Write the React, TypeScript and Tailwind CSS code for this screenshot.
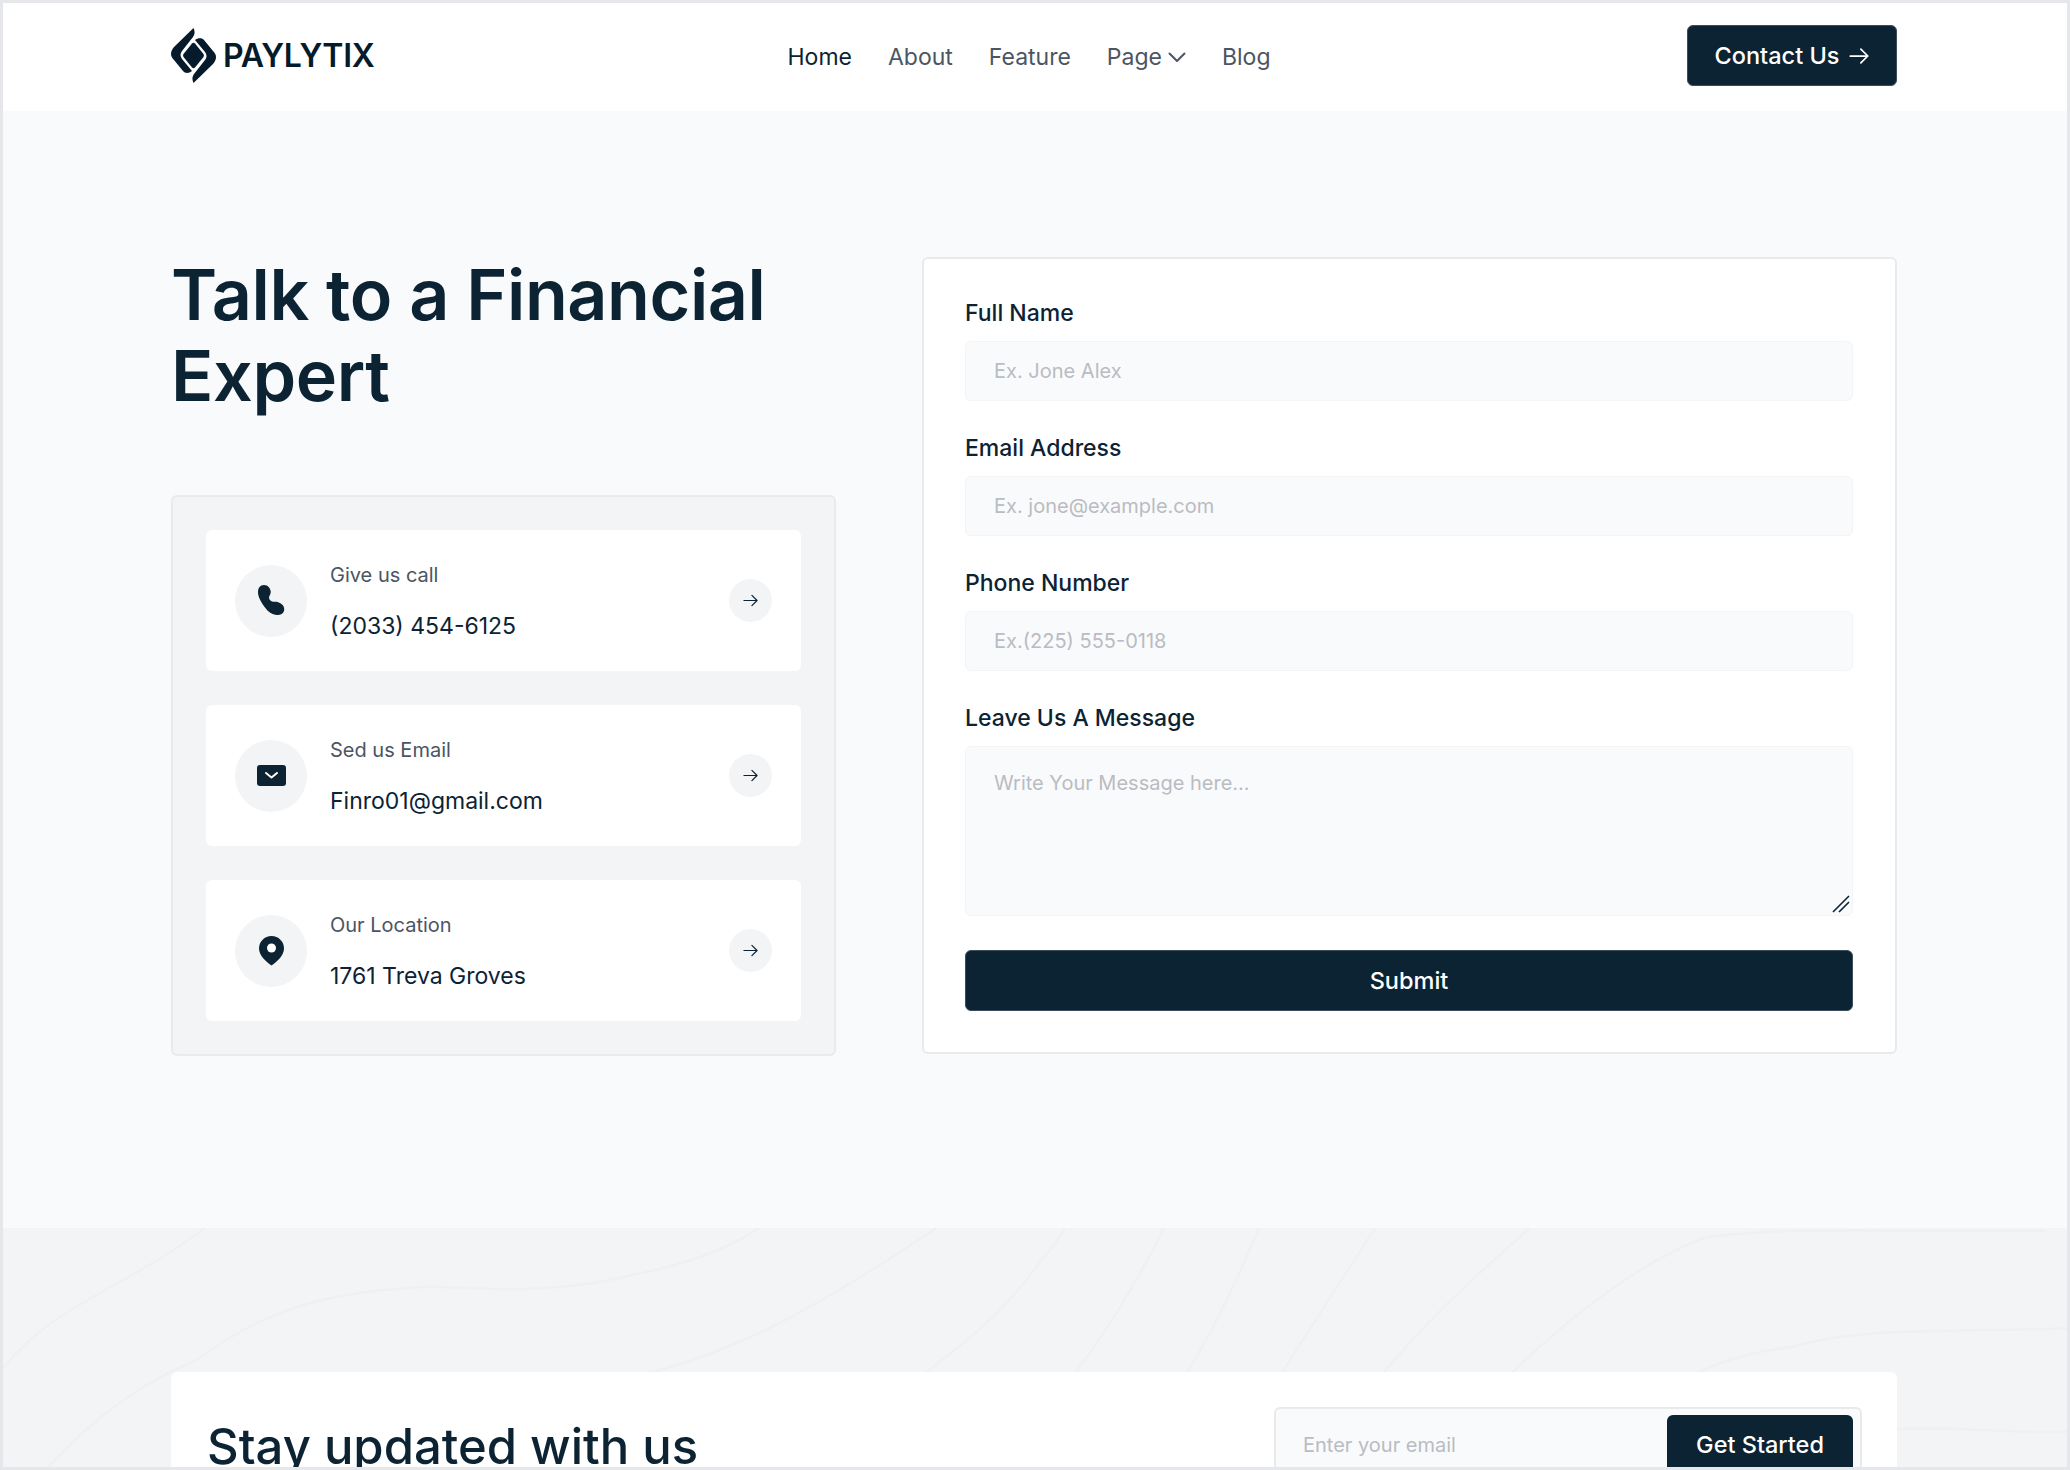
const Arrow = ({ size = 15, width = 1.3 }: { size?: number; width?: number }) => (
  <svg width={size} height={size} viewBox="0 0 16 16" fill="none" stroke="currentColor" strokeWidth={width} strokeLinecap="round" strokeLinejoin="round">
    <path d="M1 8h14M9.5 2.5 15 8l-5.5 5.5" />
  </svg>
);

const Logo = () => (
  <svg width="45" height="55" viewBox="0 0 45 55" fill="#051a2a">
    <path d="M22.5 0C24 3 24 6 22 9L11 23C9 25.5 9 28.5 11 31L21 43C18 45.5 14 45.5 12 43L3 32C-1 28-1 24 3 19Z" />
    <path d="M22.5 0C24 3 24 6 22 9L11 23C9 25.5 9 28.5 11 31L21 43C18 45.5 14 45.5 12 43L3 32C-1 28-1 24 3 19Z" transform="rotate(180 22.5 27.5)" />
    <path d="M21 15.5Q22.5 14 24 15.5L32.5 26Q33.5 27.5 32.5 29L24 39.5Q22.5 41 21 39.5L12.5 29Q11.5 27.5 12.5 26Z" />
  </svg>
);

const PhoneIcon = () => (
  <svg width="27" height="31" viewBox="0 0 27 31" fill="#0c2333">
    <path d="M6 0C10 0 12 3 12.7 6C13.2 9 11 10.5 11 13C11.5 15 13 16.5 15 16.8C17.5 16.5 19.5 16.5 22 18C25 19.5 27 22.5 26 26C25 29 22 30.5 18.5 30C14 29.5 10 27 7 22.5C3 17 0 12 0 7C0 3 2 0 6 0Z" />
  </svg>
);

const MailIcon = () => (
  <svg width="29" height="21" viewBox="0 0 29 21">
    <rect width="29" height="21" rx="3" fill="#0c2333" />
    <path d="M9 8l5.5 4.5L20 8" fill="none" stroke="#fff" strokeWidth="2" strokeLinecap="round" strokeLinejoin="round" />
  </svg>
);

const PinIcon = () => (
  <svg width="25" height="30" viewBox="0 0 25 30">
    <path d="M12.5 0C19.5 0 25 5.5 25 12.5C25 19.5 18 25.5 12.5 29.5C7 25.5 0 19.5 0 12.5C0 5.5 5.5 0 12.5 0Z" fill="#0c2333" />
    <circle cx="12.5" cy="12" r="4.5" fill="#fff" />
  </svg>
);

const contacts = [
  { icon: <PhoneIcon />, label: 'Give us call', value: '(2033) 454-6125' },
  { icon: <MailIcon />, label: 'Sed us Email', value: 'Finro01@gmail.com' },
  { icon: <PinIcon />, label: 'Our Location', value: '1761 Treva Groves' },
];

const fields = [
  { label: 'Full Name', placeholder: 'Ex. Jone Alex' },
  { label: 'Email Address', placeholder: 'Ex. jone@example.com' },
  { label: 'Phone Number', placeholder: 'Ex.(225) 555-0118' },
];

const inputClass =
  'w-full bg-[#f9fafb] border border-[#f3f4f6] rounded-md px-[28px] text-[20px] text-[#0c2333] placeholder:text-[#b9bcc2] outline-none';

const Waves = () => (
  <svg className="absolute inset-0 w-full h-full" viewBox="0 0 2064 240" preserveAspectRatio="none" fill="none" stroke="#eff0f2" strokeWidth="2">
    <path d="M-3 115C50 60 120 50 202 0" />
    <path d="M-3 239C60 170 120 130 195 105C270 60 340 50 426 47C480 48 520 52 590 44C650 35 710 25 756 0" />
    <path d="M327 144C350 132 380 128 419 127C470 128 520 132 590 125C720 110 820 60 934 0" />
    <path d="M129 239C140 225 155 210 169 215" />
    <path d="M875 144C950 100 1000 70 1032 32C1045 20 1055 10 1062 0" />
    <path d="M1045 144C1090 100 1130 50 1161 0" />
    <path d="M1161 144C1200 100 1230 50 1256 0" />
    <path d="M1256 144C1300 90 1340 40 1372 0" />
    <path d="M1355 144C1400 90 1470 40 1527 0" />
    <path d="M1474 144C1550 80 1630 30 1700 8C1780-2 1900 4 2042 2" />
    <path d="M1643 144C1690 110 1740 100 1790 95C1860 78 1960 84 2067 80" />
    <path d="M1893 161C1950 158 2010 165 2067 163" />
  </svg>
);

const App = () => {
  return (
    <div className="h-[1470px] overflow-hidden border-[3px] border-[#e5e7eb] bg-[#f9fafb] text-[#0c2333] font-['Inter',sans-serif]">
      <header className="h-[108px] bg-white pl-[168px] pr-[170px] flex items-center justify-between">
        <div className="flex items-center gap-[7px] w-[590px] -mt-[3px]">
          <Logo />
          <span className="text-[32px] font-semibold leading-none tracking-[-0.3px] text-[#051a2a]">PAYLYTIX</span>
        </div>
        <nav className="flex items-center gap-[36px] text-[23px] text-[#4b5563]">
          <a className="text-[#0c2333]">Home</a>
          <a>About</a>
          <a>Feature</a>
          <a className="flex items-center gap-[6px]">
            Page
            <svg width="18" height="11" viewBox="0 0 18 11" fill="none" stroke="currentColor" strokeWidth="2" strokeLinecap="round" strokeLinejoin="round">
              <path d="M1.5 1.5 9 9l7.5-7.5" />
            </svg>
          </a>
          <a>Blog</a>
        </nav>
        <div className="w-[600px] flex justify-end -mt-[3px]">
          <button className="h-[61px] w-[210px] rounded-md bg-[#0c2333] border border-[#3a4d5b] text-white text-[23.5px] font-medium flex items-center justify-center gap-[10px]">
            Contact Us
            <Arrow size={20} width={1.4} />
          </button>
        </div>
      </header>

      <main className="pl-[168px] pr-[170px] pt-[146px] h-[1117px] flex gap-[86px] items-start">
        <div className="w-[665px] shrink-0">
          <h1 className="text-[70px] leading-[81px] font-semibold tracking-[-0.4px] h-[238px] -mt-[3px] mb-[3px]">
            Talk to a Financial
            <br />
            Expert
          </h1>
          <div className="h-[561px] bg-[#f3f4f6] border-2 border-[#e9eaec] rounded-md p-[33px] flex flex-col gap-[34px]">
            {contacts.map((c) => (
              <div key={c.label} className="h-[141px] bg-white rounded-md pl-[29px] pr-[29px] flex items-center">
                <div className="w-[72px] h-[72px] rounded-full bg-[#f3f4f6] flex items-center justify-center">{c.icon}</div>
                <div className="ml-[23px] mt-[1px] flex-1 flex flex-col gap-[19px]">
                  <p className="text-[20px] leading-[30px] text-[#4b5563]">{c.label}</p>
                  <p className="text-[23px] leading-[34px]">{c.value}</p>
                </div>
                <div className="w-[43px] h-[43px] rounded-full bg-[#f3f4f6] flex items-center justify-center">
                  <Arrow />
                </div>
              </div>
            ))}
          </div>
        </div>

        <form className="w-[975px] h-[797px] bg-white border-2 border-[#e9eaec] rounded-md pl-[41px] pr-[42px] pt-[38px]">
          {fields.map((f) => (
            <div key={f.label} className="mb-[31px]">
              <label className="block text-[23px] leading-[32px] font-medium mb-[12px]">{f.label}</label>
              <input className={inputClass + ' h-[60px]'} placeholder={f.placeholder} />
            </div>
          ))}
          <div>
            <label className="block text-[23px] leading-[32px] font-medium mb-[12px]">Leave Us A Message</label>
            <div className="relative h-[170px]">
              <textarea className={inputClass + ' h-full pt-[21px] resize-none block'} placeholder="Write Your Message here..." />
              <svg className="absolute right-[3px] bottom-[3px]" width="18" height="18" viewBox="0 0 18 18" stroke="#0c2333" strokeWidth="1.6" fill="none">
                <path d="M1 17 17 1M7 17 17 7" />
              </svg>
            </div>
          </div>
          <button type="button" className="mt-[34px] w-full h-[61px] rounded-md bg-[#0c2333] border border-[#3a4d5b] text-white text-[23.5px] font-medium">
            Submit
          </button>
        </form>
      </main>

      <section className="relative h-[300px] bg-[#f3f4f6] pl-[168px] pr-[170px] pt-[144px]">
        <Waves />
        <div className="relative h-[200px] bg-white rounded-md pl-[36px] pr-[35px] pt-[35px] flex justify-between items-start">
          <h2 className="text-[49px] leading-[64px] font-medium mt-[8px]">Stay updated with us</h2>
          <div className="w-[588px] h-[100px] bg-[#f9fafb] border-2 border-[#e9eaec] rounded-md pl-[27px] pr-[7px] pt-[6px] flex items-start">
            <input className="flex-1 min-w-0 h-[60px] bg-transparent text-[20px] placeholder:text-[#b9bcc2] outline-none" placeholder="Enter your email" />
            <button className="w-[186px] h-[60px] rounded-md bg-[#0c2333] text-white text-[23.5px] font-medium">Get Started</button>
          </div>
        </div>
      </section>
    </div>
  );
};

export default App;
